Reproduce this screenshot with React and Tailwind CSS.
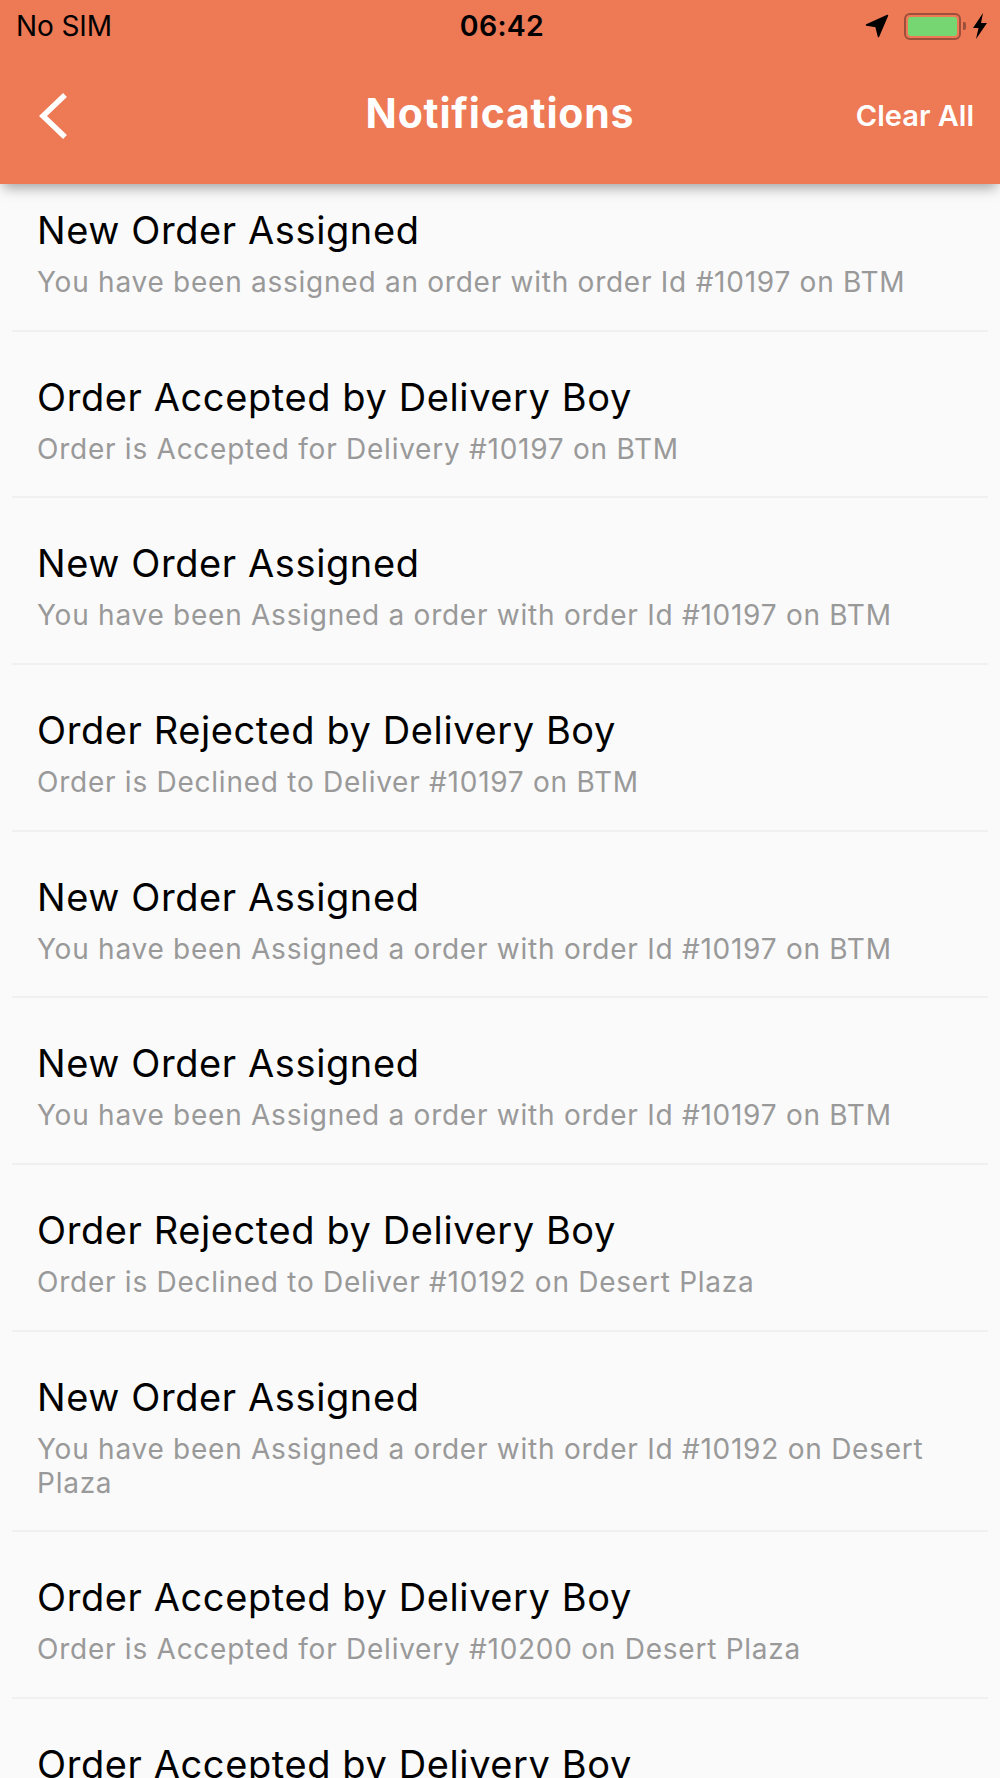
const rows = [
  ["New Order Assigned", "You have been assigned an order with order Id #10197 on BTM"],
  ["Order Accepted by Delivery Boy", "Order is Accepted for Delivery #10197 on BTM"],
  ["New Order Assigned", "You have been Assigned a order with order Id #10197 on BTM"],
  ["Order Rejected by Delivery Boy", "Order is Declined to Deliver #10197 on BTM"],
  ["New Order Assigned", "You have been Assigned a order with order Id #10197 on BTM"],
  ["New Order Assigned", "You have been Assigned a order with order Id #10197 on BTM"],
  ["Order Rejected by Delivery Boy", "Order is Declined to Deliver #10192 on Desert Plaza"],
  ["New Order Assigned", "You have been Assigned a order with order Id #10192 on Desert Plaza"],
  ["Order Accepted by Delivery Boy", "Order is Accepted for Delivery #10200 on Desert Plaza"],
  ["Order Accepted by Delivery Boy", ""],
];

export default function App() {
  return (
    <div className="h-[1778px] w-[1000px] overflow-hidden bg-[#fafafa] font-['Inter','Liberation_Sans',sans-serif]">
      <header className="relative z-10 h-[184px] bg-[#ed7955] shadow-[0_7px_12px_-3px_rgba(0,0,0,0.35)]">
        <div className="flex h-[52px] items-center justify-between pl-4 pr-[12px] text-black">
          <span className="w-[200px] text-[28px] tracking-[-0.1px]">No SIM</span>
          <span className="text-[28.5px] font-semibold tracking-[0.3px]">06:42</span>
          <div className="flex w-[200px] items-center justify-end">
            <svg width="24" height="24" viewBox="0 0 24 24" className="mr-[15px]">
              <path d="M22.5 1.5 1.5 11l9.5 1.5 2.5 10z" fill="#000" stroke="#000" strokeWidth="1.5" strokeLinejoin="round" />
            </svg>
            <div className="flex items-center">
              <div className="h-[27px] w-[57px] rounded-[6px] border-[2px] border-[#9c4f3a] p-[2px]">
                <div className="h-full w-full rounded-[3px] bg-[#76d672]" />
              </div>
              <div className="ml-[2px] h-[8px] w-[3px] rounded-r-[2px] bg-[#9c4f3a]" />
            </div>
            <svg width="16" height="26" viewBox="0 0 16 26" className="ml-[6px]">
              <path d="M11 0 1 15h5.5L4 26l11-16H9z" fill="#000" />
            </svg>
          </div>
        </div>
        <div className="flex h-[132px] items-center justify-between pb-[8px] pl-[38px] pr-[26px] text-white">
          <div className="flex w-[200px] pt-[3px]">
            <svg width="30" height="48" viewBox="0 0 30 48" fill="none">
              <path d="M27 3 5 24l22 21" stroke="#fff" strokeWidth="5.5" />
            </svg>
          </div>
          <h1 className="text-[41px] font-bold tracking-[0.8px]">Notifications</h1>
          <span className="w-[212px] pt-[3px] text-right text-[29px] font-semibold">Clear All</span>
        </div>
      </header>
      <main className="flex flex-col px-3">
        {rows.map(([title, body], i) => (
          <div
            key={i}
            className={`border-b-2 border-[#f0f0f0] px-[25px] pb-[30.67px] ${i === 0 ? "pt-[21px]" : "pt-[40px]"}`}
          >
            <div className="text-[38px] leading-[50px] tracking-[0.6px] text-black">{title}</div>
            <div className="mt-[10px] text-[28px] leading-[34px] tracking-[0.75px] text-[#999999]">{body}</div>
          </div>
        ))}
      </main>
    </div>
  );
}
